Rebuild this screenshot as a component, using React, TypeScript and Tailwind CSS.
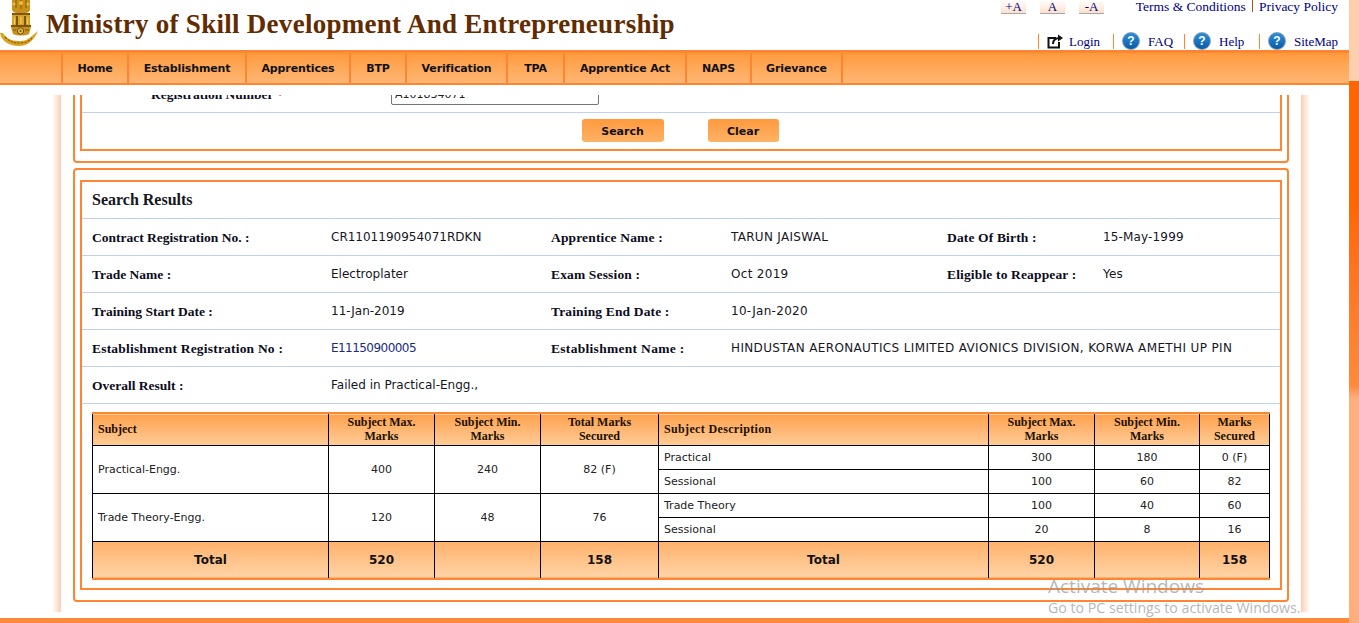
const cambria = "font-['Liberation_Serif',serif]";

const navItems = [
  { label: "Home", width: "w-[66px]" },
  { label: "Establishment", width: "w-[118px]" },
  { label: "Apprentices", width: "w-[104px]" },
  { label: "BTP", width: "w-[56px]" },
  { label: "Verification", width: "w-[101px]" },
  { label: "TPA", width: "w-[57px]" },
  { label: "Apprentice Act", width: "w-[122px]" },
  { label: "NAPS", width: "w-[65px]" },
  { label: "Grievance", width: "w-[91px]" },
];

const details = [
  [
    ["Contract Registration No. :", "CR1101190954071RDKN"],
    ["Apprentice Name :", "TARUN JAISWAL"],
    ["Date Of Birth :", "15-May-1999"],
  ],
  [
    ["Trade Name :", "Electroplater"],
    ["Exam Session :", "Oct 2019"],
    ["Eligible to Reappear :", "Yes"],
  ],
  [
    ["Training Start Date :", "11-Jan-2019"],
    ["Training End Date :", "10-Jan-2020"],
  ],
];

function Emblem() {
  return (
    <svg width="38" height="47" viewBox="0 0 38 47" className="shrink-0">
      {/* lions */}
      <path d="M12 0 H30 V9 C30 12 27 13 25 13 H17 C15 13 12 12 12 9 Z" fill="#c8921a" />
      <path d="M16 0 V8 M21 0 V9 M26 0 V8" stroke="#8a6210" strokeWidth="1.2" />
      <circle cx="14" cy="4" r="1.600" fill="#e8bb44" />
      <circle cx="21" cy="3" r="2" fill="#e8bb44" />
      <circle cx="28" cy="4" r="1.600" fill="#e8bb44" />
      <rect x="12" y="13" width="18" height="2" fill="#7a5410" />
      {/* chests and legs */}
      <path d="M12 15 H30 V25 H12 Z" fill="#d8a428" />
      <path d="M17 16 V25 M25 16 V25" stroke="#6f4d0d" strokeWidth="1.800" />
      <path d="M14.500 18 V24 M21 17 V24 M27.500 18 V24" stroke="#f0ca5c" strokeWidth="1.200" />
      {/* abacus with wheel */}
      <rect x="11" y="25" width="20" height="2" fill="#7a5410" />
      <path d="M11 27 H31 L29 34 C25 36 17 36 13 34 Z" fill="#c8921a" />
      <circle cx="20.500" cy="31" r="3.200" fill="#e8bb44" stroke="#6f4d0d" strokeWidth="1" />
      <circle cx="20.500" cy="31" r="1" fill="#6f4d0d" />
      <path d="M13 30 H16 M25 30 H29" stroke="#7a5410" strokeWidth="1.200" />
      {/* ribbon */}
      <path d="M0 33 C1 40 8 46 19 46 C28 46 34 40 38 31 L33 35 C28 40 24 41 19 41 C11 41 6 38 3 33 Z" fill="#dba51f" />
      <path d="M5 37 C10 42 14 43 19 43 C24 43 28 42 32 38" fill="none" stroke="#8a6210" strokeWidth="1.200" strokeDasharray="2.500 1" />
    </svg>
  );
}

function HelpIcon() {
  return (
    <span className="flex h-[18px] w-[18px] items-center justify-center rounded-full border border-[#8aa0b0] bg-gradient-to-b from-[#2b8fdc] to-[#0a5aa8] font-['Liberation_Sans',sans-serif] text-[12px] leading-none font-bold text-white">
      ?
    </span>
  );
}

function Header() {
  return (
    <header className="flex h-[50px] justify-between overflow-hidden">
      <div className="flex">
        <Emblem />
        <h1 className={`mt-[7px] ml-2 text-[27px] leading-[34px] font-bold tracking-[0.28px] whitespace-nowrap text-[#632b00] ${cambria}`}>
          Ministry of Skill Development And Entrepreneurship
        </h1>
      </div>
      <div className={`flex w-[348px] flex-col pr-[11px] text-[#000080] ${cambria}`}>
        <div className="flex h-[14px] items-start text-[13px] leading-none">
          {["+A", "A", "-A"].map((t) => (
            <span key={t} className="mr-[14px] flex h-[14px] w-[25px] justify-center border-b border-[#a8a8a8] bg-gradient-to-b from-white to-[#fde0cc]">
              {t}
            </span>
          ))}
          <span className="ml-auto text-[13.5px] whitespace-nowrap">Terms &amp; Conditions</span>
          <span className="mx-[6px] h-[12px] w-[1px] bg-[#a85a10]" />
          <span className="text-[13.5px] whitespace-nowrap">Privacy Policy</span>
        </div>
        <div className="mt-[19px] flex h-[16px] items-center justify-end text-[13px] leading-none">
          <span className="h-[15px] w-[1px] bg-[#ff8533]" />
          <svg width="17" height="15" viewBox="0 0 17 15" className="mr-[5px] ml-[8px]" fill="none" stroke="#111" strokeWidth="2">
            <path d="M9 4 H1.500 V13.500 H12 V8" />
            <path d="M6 10 C6 6 9 4 13 4" />
            <path d="M11 0.500 L16 4 L11 7.500 Z" fill="#111" stroke="none" />
          </svg>
          <span className="w-[31px]">Login</span>
          <span className="ml-[13px] h-[15px] w-[1px] bg-[#ff8533]" />
          <span className="mr-[8px] ml-[8px]"><HelpIcon /></span>
          <span className="w-[23px]">FAQ</span>
          <span className="ml-[13px] h-[15px] w-[1px] bg-[#ff8533]" />
          <span className="mr-[8px] ml-[8px]"><HelpIcon /></span>
          <span className="w-[26px]">Help</span>
          <span className="ml-[14px] h-[15px] w-[1px] bg-[#ff8533]" />
          <span className="mr-[8px] ml-[8px]"><HelpIcon /></span>
          <span className="w-[44px] whitespace-nowrap">SiteMap</span>
        </div>
      </div>
    </header>
  );
}

function Nav() {
  return (
    <nav className="flex h-[35px] border-t-[3px] border-b-[2px] border-[#ff8533] bg-gradient-to-b from-[#ff9a3c] to-[#ffb672] pl-[61px] font-['DejaVu_Sans',sans-serif] text-[11px] font-bold tracking-[-0.14px] text-[#111]">
      <div className="flex border-l-2 border-[#ff8533]">
        {navItems.map((item) => (
          <a key={item.label} className={`flex items-center justify-center border-r-2 border-[#ff8533] pt-[2px] ${item.width}`}>
            {item.label}
          </a>
        ))}
      </div>
    </nav>
  );
}

function Label({ className, children }: { className: string; children: React.ReactNode }) {
  return <span className={`pt-[2px] text-[13.5px] font-bold whitespace-nowrap text-[#0c0c20] ${cambria} ${className}`}>{children}</span>;
}

function Row({ items }: { items: string[][] }) {
  return (
    <div className="flex h-[37px] items-center border-b border-[#c0d3ec] pl-[10px] text-[12px]">
      <Label className="w-[239px]">{items[0][0]}</Label>
      <span className="w-[220px]">{items[0][1]}</span>
      {items[1] && (
        <>
          <Label className="w-[180px] tracking-[0.15px]">{items[1][0]}</Label>
          <span className="w-[216px] tracking-[0.3px]">{items[1][1]}</span>
        </>
      )}
      {items[2] && (
        <>
          <Label className="w-[156px] tracking-[0.15px]">{items[2][0]}</Label>
          <span className="tracking-[0.15px]">{items[2][1]}</span>
        </>
      )}
    </div>
  );
}

const th = `border-x border-black px-[5px] text-[12px] leading-[14px] font-bold text-[#201000] ${cambria}`;
const td = "border border-black px-[5px] pt-[2px] text-center";
const tdLeft = "border border-black px-[5px] pt-[2px] text-left";
const tfoot = "border-x border-black text-center text-[12px] font-bold";

function MarksTable() {
  return (
    <table className="mt-[8px] ml-[10px] w-[1177px] table-fixed border-collapse font-['DejaVu_Sans',sans-serif] text-[11px] text-[#222]">
      <colgroup>
        <col className="w-[236px]" />
        <col className="w-[106px]" />
        <col className="w-[106px]" />
        <col className="w-[118px]" />
        <col className="w-[330px]" />
        <col className="w-[106px]" />
        <col className="w-[105px]" />
        <col className="w-[70px]" />
      </colgroup>
      <thead>
        <tr className="h-[32px] border-t-2 border-[#ff8533] bg-gradient-to-b from-[#ffa24d] to-[#ffcb95]">
          <th className={`${th} text-left`}>Subject</th>
          <th className={th}>Subject Max. Marks</th>
          <th className={th}>Subject Min. Marks</th>
          <th className={th}>Total Marks Secured</th>
          <th className={`${th} text-left tracking-[0.35px]`}>Subject Description</th>
          <th className={th}>Subject Max. Marks</th>
          <th className={th}>Subject Min. Marks</th>
          <th className={th}>Marks Secured</th>
        </tr>
      </thead>
      <tbody>
        <tr className="h-[24px]">
          <td rowSpan={2} className={tdLeft}>Practical-Engg.</td>
          <td rowSpan={2} className={td}>400</td>
          <td rowSpan={2} className={td}>240</td>
          <td rowSpan={2} className={td}>82 (F)</td>
          <td className={tdLeft}>Practical</td>
          <td className={td}>300</td>
          <td className={td}>180</td>
          <td className={td}>0 (F)</td>
        </tr>
        <tr className="h-[24px]">
          <td className={tdLeft}>Sessional</td>
          <td className={td}>100</td>
          <td className={td}>60</td>
          <td className={td}>82</td>
        </tr>
        <tr className="h-[24px]">
          <td rowSpan={2} className={tdLeft}>Trade Theory-Engg.</td>
          <td rowSpan={2} className={td}>120</td>
          <td rowSpan={2} className={td}>48</td>
          <td rowSpan={2} className={td}>76</td>
          <td className={tdLeft}>Trade Theory</td>
          <td className={td}>100</td>
          <td className={td}>40</td>
          <td className={td}>60</td>
        </tr>
        <tr className="h-[24px]">
          <td className={tdLeft}>Sessional</td>
          <td className={td}>20</td>
          <td className={td}>8</td>
          <td className={td}>16</td>
        </tr>
      </tbody>
      <tfoot>
        <tr className="h-[38px] border-t border-b-2 border-t-black border-b-[#ff8533] bg-gradient-to-b from-[#ffb26a] to-[#ffd3a6] text-[#111]">
          <td className={tfoot}>Total</td>
          <td className={tfoot}>520</td>
          <td className={tfoot}></td>
          <td className={tfoot}>158</td>
          <td className={tfoot}>Total</td>
          <td className={tfoot}>520</td>
          <td className={tfoot}></td>
          <td className={tfoot}>158</td>
        </tr>
      </tfoot>
    </table>
  );
}

function SearchPanel() {
  return (
    <section className="-mt-[33px] rounded border-2 border-[#ff8533] px-[5px] pt-[10px] pb-[10px]">
      <div className="h-[77px] border-2 border-[#ff8533]">
        <div className="flex h-[37px] items-center border-b border-[#c0d3ec] pl-[69px]">
          <Label className="w-[240px]">
            Registration Number <span className="text-red-600">*</span>
          </Label>
          <input
            readOnly
            value="A101834071"
            className="mb-[1px] h-[22px] w-[208px] rounded-[2px] border border-[#767676] px-[3px] pt-[2px] font-['DejaVu_Sans',sans-serif] text-[11px] text-[#222]"
          />
        </div>
        <div className="flex justify-center gap-[44px] pt-[6px] pr-[2px] font-['DejaVu_Sans',sans-serif] text-[11px] font-bold text-[#111]">
          <button className="h-[23px] w-[82px] rounded-[3px] bg-gradient-to-b from-[#ff9a3c] to-[#ffb265] pt-[3px]">Search</button>
          <button className="h-[23px] w-[71px] rounded-[3px] bg-gradient-to-b from-[#ff9a3c] to-[#ffb265] pt-[3px]">Clear</button>
        </div>
      </div>
    </section>
  );
}

function ResultsPanel() {
  return (
    <section className="mt-[5px] rounded border-2 border-[#ff8533] px-[5px] pt-[10px] pb-[10px]">
      <div className="h-[410px] border-2 border-[#ff8533] font-['DejaVu_Sans',sans-serif] text-[#16161e]">
        <div className={`flex h-[37px] items-center border-b border-[#c0d3ec] pl-[10px] text-[16px] font-bold ${cambria}`}>
          Search Results
        </div>
        {details.map((items) => (
          <Row key={items[0][0]} items={items} />
        ))}
        <div className="flex h-[37px] items-center border-b border-[#c0d3ec] pl-[10px] text-[12px]">
          <Label className="w-[239px] tracking-[0.2px]">Establishment Registration No :</Label>
          <span className="w-[220px] tracking-[-0.55px] text-[#1a2a80]">E11150900005</span>
          <Label className="w-[180px] tracking-[0.3px]">Establishment Name :</Label>
          <span className="tracking-[0.36px] whitespace-nowrap">HINDUSTAN AERONAUTICS LIMITED AVIONICS DIVISION, KORWA AMETHI UP PIN</span>
        </div>
        <div className="flex h-[37px] items-center border-b border-[#c0d3ec] pl-[10px] text-[12px]">
          <Label className="w-[239px]">Overall Result :</Label>
          <span>Failed in Practical-Engg.,</span>
        </div>
        <MarksTable />
      </div>
    </section>
  );
}

export default function App() {
  return (
    <div className="relative flex h-[623px] w-[1359px] overflow-hidden bg-white">
      <div className="flex w-[1349px] flex-col">
        <Header />
        <Nav />
        <main className="flex h-[533px] pt-[10px] pl-[52px]">
          <div className="h-[517px] w-[9px] bg-gradient-to-r from-white to-[#fbcdb4]" />
          <div className="h-[523px] w-[1240px] overflow-hidden px-[12px]">
            <SearchPanel />
            <ResultsPanel />
          </div>
          <div className="h-[517px] w-[9px] bg-gradient-to-l from-white to-[#fbcdb4]" />
        </main>
        <div className="h-[5px] bg-[#ff8a3a]" />
      </div>
      <div className="flex w-[10px] flex-col bg-[#fdcfae]">
        <div className="h-[81px]" />
        <div className="h-[305px] bg-gradient-to-b from-[#ff6600] from-40% to-[#ff8a3a]" />
        <div className="flex-1 bg-gradient-to-b from-[#ff8a3a] to-[#ffae7c] to-[12px]" />
      </div>
      <div className="pointer-events-none absolute top-[575px] left-[1048px] font-['Open_Sans',sans-serif] text-[#9a9a9a] opacity-70">
        <div className="text-[19px] leading-[22px]">Activate Windows</div>
        <div className="mt-[2px] text-[14.2px] leading-[18px] whitespace-nowrap">Go to PC settings to activate Windows.</div>
      </div>
    </div>
  );
}
